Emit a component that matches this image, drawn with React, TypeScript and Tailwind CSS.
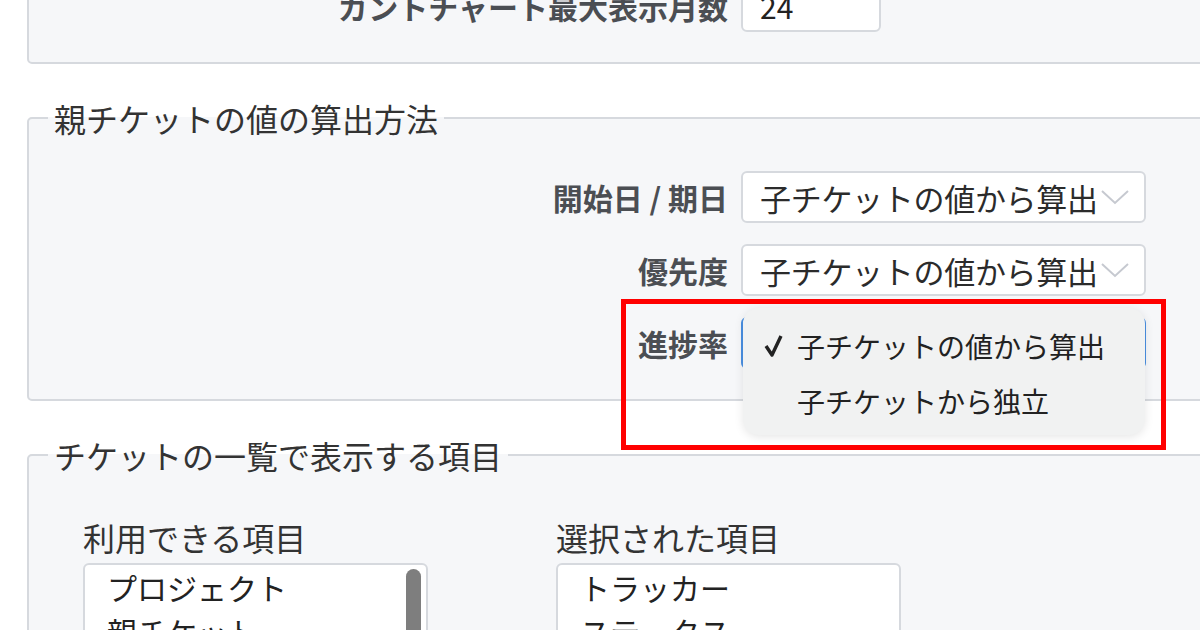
import React from "react";

const rows = [
  { label: "開始日 / 期日", value: "子チケットの値から算出" },
  { label: "優先度", value: "子チケットの値から算出" },
];

function Chevron() {
  return (
    <svg width="30" height="16" viewBox="0 0 30 16" className="shrink-0">
      <polyline points="2,2 15,14 28,2" fill="none" stroke="#c6c9d0" strokeWidth="2" />
    </svg>
  );
}

function SelectBox({ value, focused }: { value: string; focused?: boolean }) {
  return (
    <div
      className={`flex h-[52px] w-[405px] items-center justify-between rounded-[6px] border-2 bg-white pl-[17px] pr-[14px] ${
        focused ? "border-[#4a90e2]" : "border-[#d6d9de]"
      }`}
    >
      <span className="whitespace-nowrap text-[31px] leading-none tracking-[-0.3px] text-[#2b2b2b]">{value}</span>
      <Chevron />
    </div>
  );
}

export default function App() {
  return (
    <div className="relative h-[630px] w-[1200px] overflow-hidden bg-white font-['Noto_Sans_CJK_JP',sans-serif] text-[#333]">
      <div className="ml-[27px] w-[1220px]">
        {/* ガントチャート */}
        <div className="-mt-[40px] rounded-[5px] border-2 border-[#d6d9de] bg-[#f6f7f9] pt-[18px] pb-[30px] pl-[19px]">
          <div className="flex items-center">
            <div className="w-[680px] text-right text-[30px] font-bold leading-[40px] text-[#4b4e53]">ガントチャート最大表示月数</div>
            <div className="ml-[13px] flex h-[52px] w-[140px] items-center rounded-[6px] border-2 border-[#d6d9de] bg-white pl-[17px] text-[30px] text-[#222]">
              24
            </div>
          </div>
        </div>

        {/* 親チケットの値の算出方法 */}
        <fieldset className="mt-[35px] rounded-[5px] border-2 border-[#d6d9de] bg-[#f6f7f9] pl-[19px] pt-[34px] pb-[30px]">
          <legend className="px-[6px] text-[32px] leading-[38px] text-[#333]">親チケットの値の算出方法</legend>
          <div className="flex flex-col gap-[21px]">
            {rows.map((r) => (
              <div key={r.label} className="flex items-center">
                <div className="w-[680px] text-right text-[30px] font-bold text-[#4b4e53]">{r.label}</div>
                <div className="ml-[13px]">
                  <SelectBox value={r.value} />
                </div>
              </div>
            ))}
            <div className="flex items-center">
              <div className="w-[680px] text-right text-[30px] font-bold text-[#4b4e53]">進捗率</div>
              <div className="ml-[13px]">
                <SelectBox value="子チケットの値から算出" focused />
              </div>
            </div>
          </div>
        </fieldset>

        {/* チケットの一覧で表示する項目 */}
        <fieldset className="mt-[35px] rounded-[5px] border-2 border-[#d6d9de] bg-[#f6f7f9] pl-[19px] pt-[43px] pb-[30px]">
          <legend className="px-[6px] text-[32px] leading-[38px] text-[#333]">チケットの一覧で表示する項目</legend>
          <div className="flex gap-[128px] pl-[35px]">
            <div className="w-[345px]">
              <div className="mb-[6px] text-[32px] leading-[40px] text-[#333]">利用できる項目</div>
              <div className="relative h-[200px] rounded-[6px] border-2 border-[#d6d9de] bg-white px-[22px] text-[30px] leading-[44px] text-[#222]">
                <div>プロジェクト</div>
                <div>親チケット</div>
                <div className="absolute right-[5px] top-[4px] h-[180px] w-[15px] rounded-full bg-[#7e7e7e]" />
              </div>
            </div>
            <div className="w-[345px]">
              <div className="mb-[6px] text-[32px] leading-[40px] text-[#333]">選択された項目</div>
              <div className="h-[200px] rounded-[6px] border-2 border-[#d6d9de] bg-white px-[22px] text-[30px] leading-[44px] text-[#222]">
                <div>トラッカー</div>
                <div>ステータス</div>
              </div>
            </div>
          </div>
        </fieldset>
      </div>

      {/* open dropdown */}
      <div className="absolute left-[743px] top-[308px] flex h-[127px] w-[402px] flex-col rounded-[16px] bg-[#f1f2f2] pt-[10px] shadow-[0_2px_10px_rgba(0,0,0,0.10)]">
        <div className="flex h-[55px] items-center">
          <svg width="32" height="26" viewBox="0 0 32 26" className="ml-[20px] mr-[2px]">
            <polyline points="3,13 9,22 18,3" fill="none" stroke="#222" strokeWidth="3.4" strokeLinejoin="round" />
          </svg>
          <span className="text-[28px] text-[#222]">子チケットの値から算出</span>
        </div>
        <div className="flex h-[55px] items-center pl-[54px]">
          <span className="text-[28px] text-[#222]">子チケットから独立</span>
        </div>
      </div>

      {/* annotation frame */}
      <div className="absolute left-[621px] top-[299px] h-[151px] w-[545px] border-[5px] border-[#ff0000]" />
    </div>
  );
}
